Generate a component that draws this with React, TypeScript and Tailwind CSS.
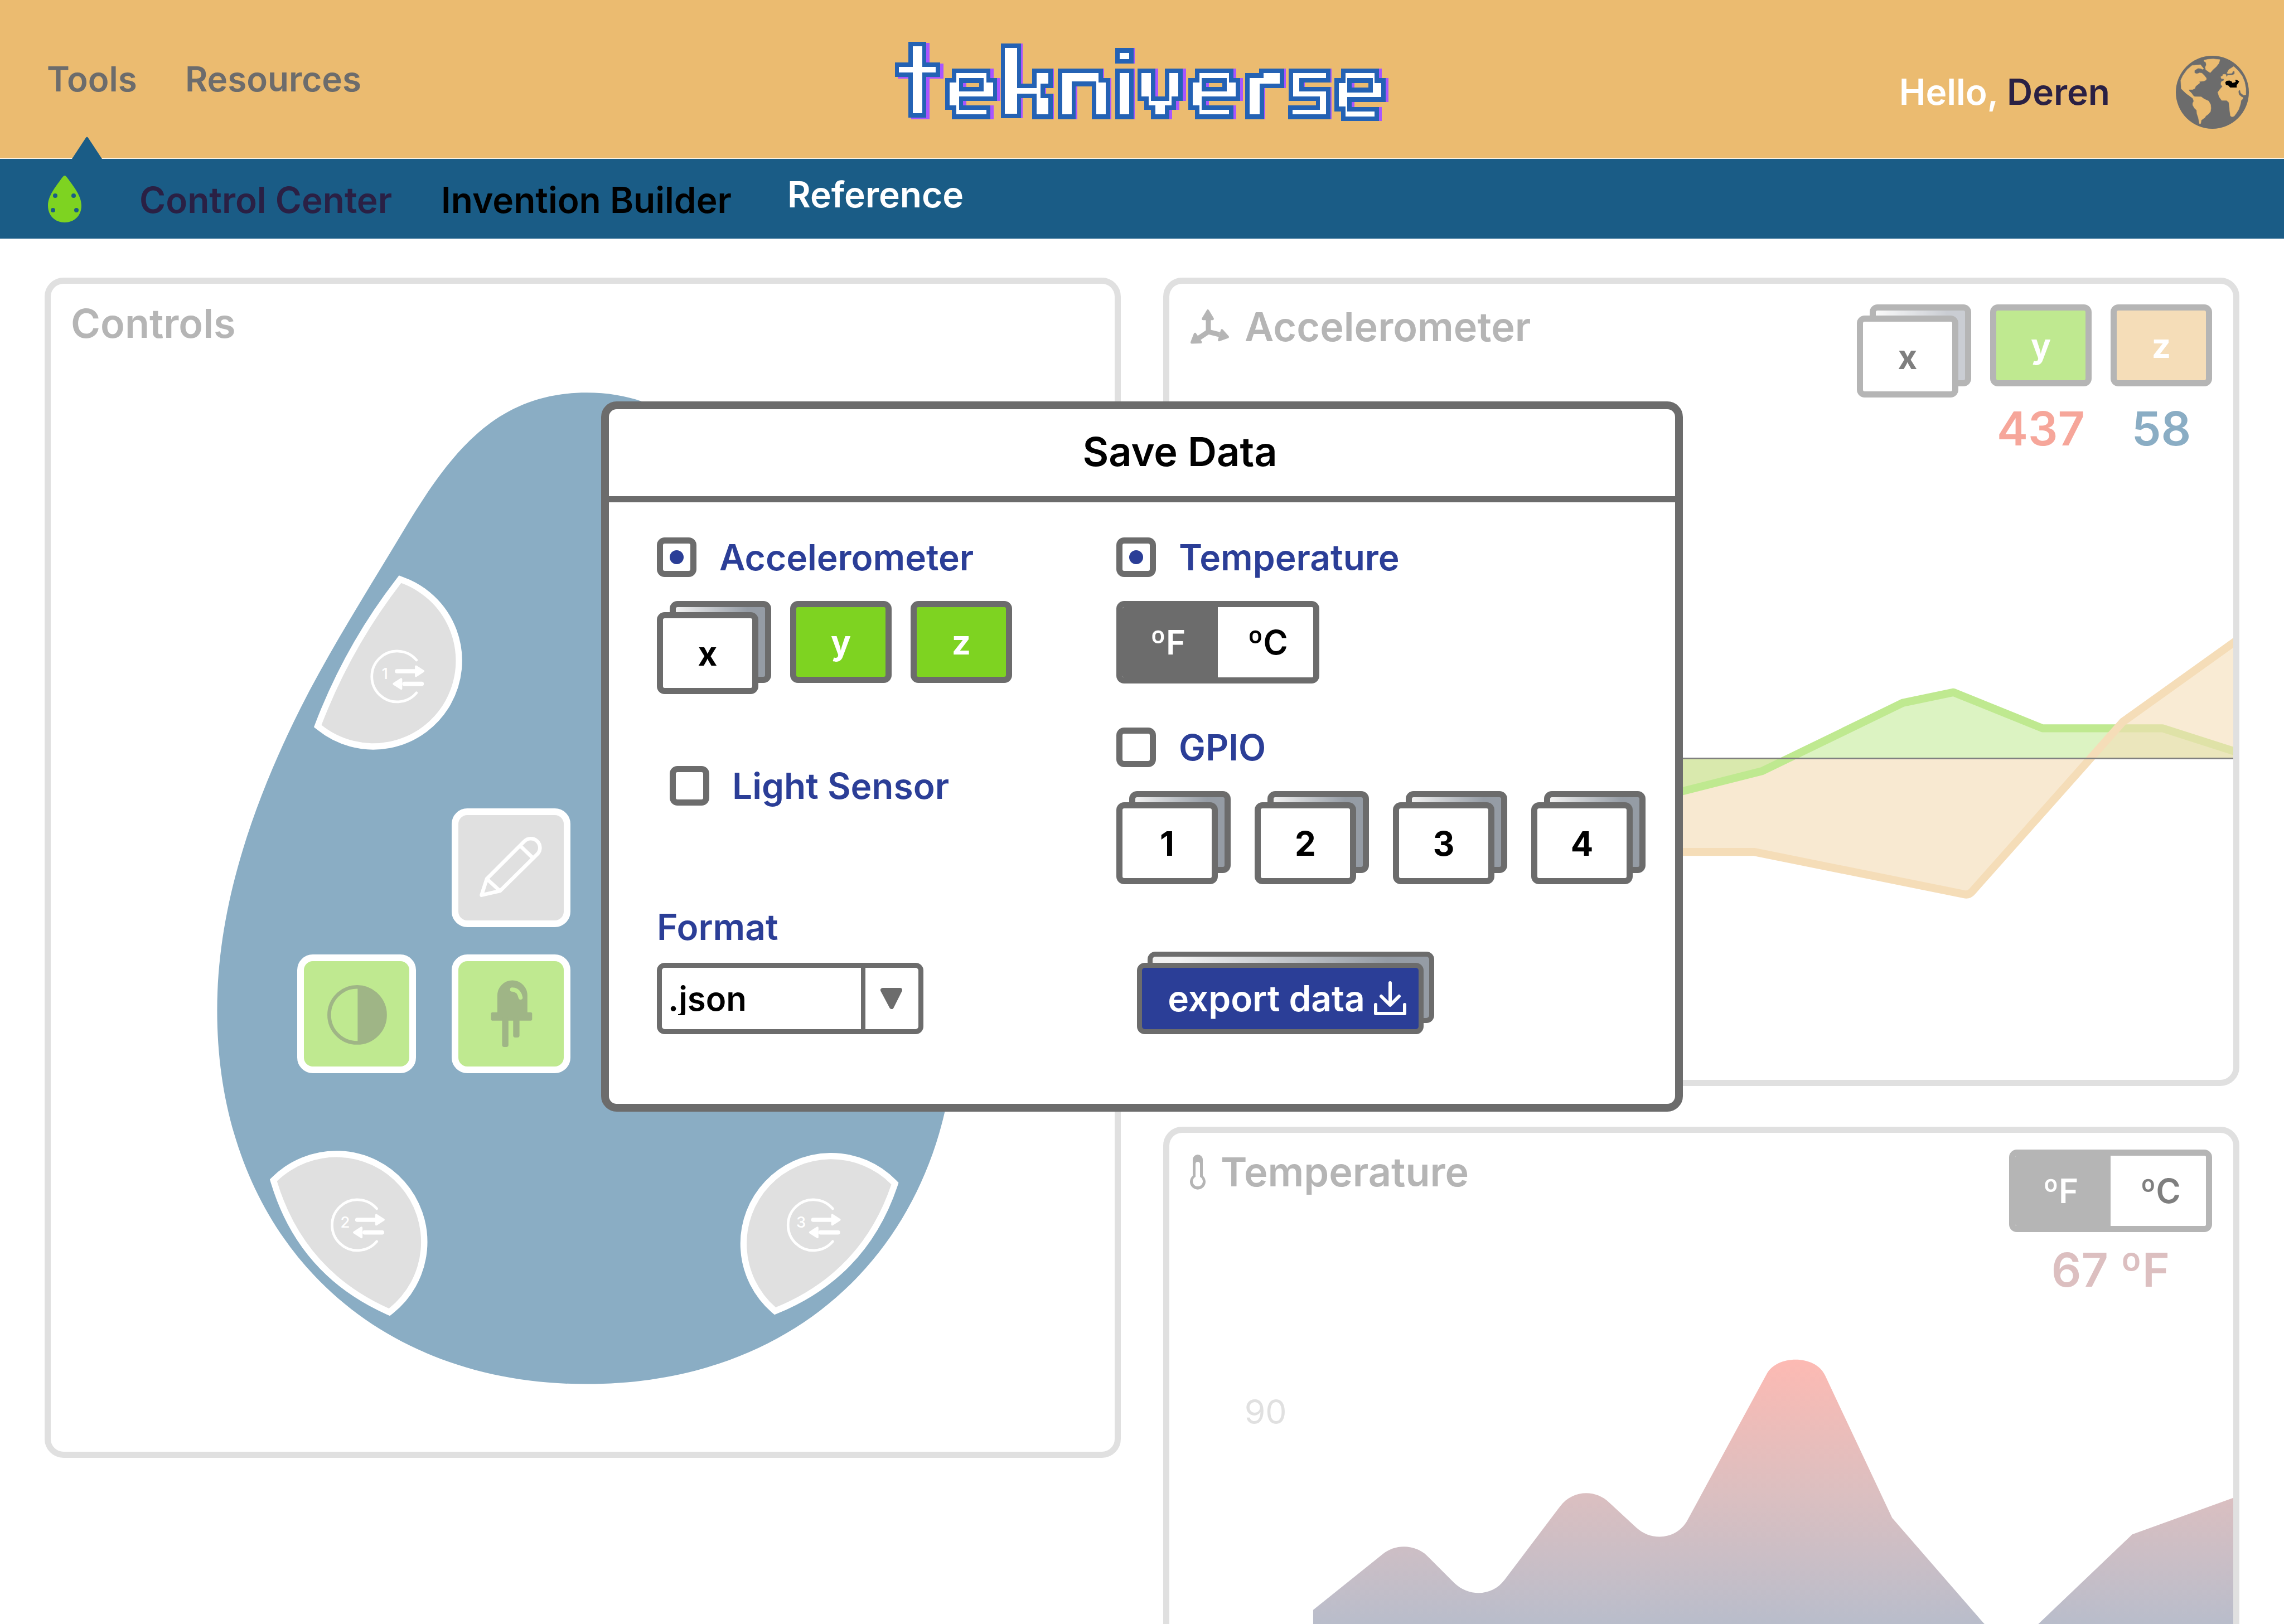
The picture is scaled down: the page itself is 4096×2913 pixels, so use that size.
import React, { useState } from "react";

type Box = [number, number, number, number];

/* Pixel wordmark: every letter is a set of blocks given as x1, y1, x2, y2. */
const letterE = (dx: number): Box[] => [
  [232 + dx, 268, 320 + dx, 296],
  [212 + dx, 320, 239 + dx, 450],
  [232 + dx, 268, 239 + dx, 502],
  [313 + dx, 320, 340 + dx, 398],
  [313 + dx, 268, 320 + dx, 322],
  [212 + dx, 372, 340 + dx, 398],
  [232 + dx, 476, 320 + dx, 502],
];

const wordmark: { shadow: [number, number]; boxes: Box[] }[] = [
  { shadow: [9, 9], boxes: [[102, 114, 130, 493], [62, 231, 171, 262]] },
  { shadow: [9, 0], boxes: letterE(0) },
  {
    shadow: [4, 0],
    boxes: [
      [376, 124, 411, 498],
      [411, 353, 481, 383],
      [470, 268, 504, 326],
      [470, 410, 504, 502],
      [470, 268, 481, 502],
    ],
  },
  {
    shadow: [4, 0],
    boxes: [
      [546, 268, 573, 502],
      [546, 268, 653, 315],
      [647, 320, 674, 502],
      [647, 268, 653, 322],
    ],
  },
  { shadow: [4, 0], boxes: [[716, 151, 744, 188], [716, 268, 744, 502]] },
  {
    shadow: [9, 0],
    boxes: [
      [781, 268, 808, 398],
      [863, 268, 890, 398],
      [802, 268, 808, 450],
      [863, 268, 870, 450],
      [802, 424, 870, 450],
      [822, 424, 850, 502],
    ],
  },
  { shadow: [9, 0], boxes: letterE(720) },
  {
    shadow: [4, 0],
    boxes: [
      [1101, 294, 1131, 502],
      [1101, 294, 1142, 326],
      [1142, 268, 1191, 326],
    ],
  },
  {
    shadow: [4, 0],
    boxes: [
      [1230, 268, 1327, 294],
      [1230, 268, 1248, 398],
      [1230, 372, 1327, 398],
      [1310, 372, 1327, 502],
      [1228, 476, 1327, 502],
    ],
  },
  {
    shadow: [8, 0],
    boxes: [
      [1385, 268, 1472, 296],
      [1365, 322, 1391, 458],
      [1385, 268, 1391, 512],
      [1466, 322, 1492, 404],
      [1466, 268, 1472, 324],
      [1365, 376, 1492, 404],
      [1385, 486, 1472, 512],
    ],
  },
];

function Wordmark() {
  return (
    <svg
      viewBox="48 86 1468 456"
      preserveAspectRatio="none"
      shapeRendering="crispEdges"
      className="h-[144px] w-[888px]"
      role="img"
      aria-label="tekniverse"
    >
      {wordmark.map(({ shadow, boxes }, i) => (
        <g key={i}>
          {boxes.map(([x1, y1, x2, y2], j) => (
            <rect key={j} x={x1 - 13 + shadow[0]} y={y1 - 26 + shadow[1]} width={x2 - x1 + 26} height={y2 - y1 + 52} fill="#a855ff" />
          ))}
          {boxes.map(([x1, y1, x2, y2], j) => (
            <rect key={j} x={x1 - 13} y={y1 - 26} width={x2 - x1 + 26} height={y2 - y1 + 52} fill="#2462b4" />
          ))}
          {boxes.map(([x1, y1, x2, y2], j) => (
            <rect key={j} x={x1} y={y1} width={x2 - x1} height={y2 - y1} fill="#fff" />
          ))}
        </g>
      ))}
    </svg>
  );
}

function Globe() {
  return (
    <svg viewBox="78 75 414 414" className="size-[131px]" aria-hidden="true">
      <circle cx="285" cy="282" r="207" fill="#6c6c6c" />
      <g fill="#ebbb70" strokeLinejoin="round" stroke="#ebbb70" strokeWidth="2">
        <path d="M170 130L218 126L236 149L228 152L222 148L204 145L184 158L183 170L192 177L204 176L212 172L226 174L240 188L251 202L250 212L238 218L210 221L214 229L190 248L186 260L174 266L152 267L153 274L166 286L179 304L186 307L222 308L238 320L264 332L275 352L277 372L274 392L262 406L248 416L242 426L222 440L219 459L212 460L206 428L198 404L196 384L184 372L174 355L174 344L180 332L174 316L158 304L136 288L109 262L106 214L118 188L142 154Z" />
        <path d="M238 100L262 95L290 93L328 97L322 118L306 138L290 152L273 171L262 164L248 154L245 140L251 126L248 112L238 106Z" />
        <path d="M406 136L430 158L454 190L468 224L475 262L475 296L462 298L446 286L443 272L437 268L432 280L436 296L450 308L459 312L457 320L448 328L444 350L434 380L420 402L408 418L396 421L388 416L384 390L379 340L366 328L338 328L324 308L316 282L328 266L342 250L334 238L334 228L338 220L350 216L351 206L336 204L333 194L344 188L344 182L354 180L362 182L364 194L369 192L372 186L392 186L406 182L412 174L410 162L402 162L396 174L376 176L368 174L378 154Z" />
      </g>
      <path d="M358 226L366 217L382 216L396 222L398 229L412 226L418 222L414 211L424 212L437 220L430 234L423 240L423 255L386 255L376 244L362 240Z" fill="#000" />
    </svg>
  );
}

function DropMark() {
  return (
    <svg viewBox="0 0 60 84" className="h-[84px] w-[60px]" aria-hidden="true">
      <path d="M30 0C32 0 34 3 37 7C46 20 60 36 60 54C60 72 47 84 30 84C13 84 0 72 0 54C0 36 14 20 23 7C26 3 28 0 30 0Z" fill="#7ed321" />
      <g fill="#1a5c86">
        <circle cx="13" cy="36" r="4" />
        <circle cx="46" cy="36" r="4" />
        <circle cx="9" cy="62" r="4" />
        <circle cx="51" cy="62" r="4" />
      </g>
    </svg>
  );
}

type Tone = "solid" | "faded";

function StackedKey({ label, tone }: { label: string; tone: Tone }) {
  const solid = tone === "solid";
  return (
    <div className="relative pt-5 pr-[23px]">
      <div
        className={
          "absolute top-0 right-0 h-[147px] w-[182px] rounded-[14px] border-[11px] " +
          (solid
            ? "border-[#6c6c6c] bg-linear-to-r from-[#f2f2f2] to-[#959ca5] to-80%"
            : "border-[#b5b5b5] bg-linear-to-r from-[#fafafa] to-[#cacdd3] to-80%")
        }
      />
      <button
        type="button"
        className={
          "relative block h-[147px] w-[182px] rounded-[14px] border-[11px] bg-white text-[60px] leading-none font-bold " +
          (solid ? "border-[#6c6c6c] text-black" : "border-[#b5b5b5] text-[#7f7f7f]")
        }
      >
        {label}
      </button>
    </div>
  );
}

function FlatKey({ label, look }: { label: string; look: string }) {
  return (
    <button
      type="button"
      className={"block h-[147px] w-[182px] rounded-[14px] border-[11px] text-[60px] leading-none font-bold text-white " + look}
    >
      {label}
    </button>
  );
}

function UnitToggle({ tone }: { tone: Tone }) {
  const solid = tone === "solid";
  return (
    <div
      role="group"
      aria-label="Temperature unit"
      className={
        "grid h-[148px] w-[364px] grid-cols-2 overflow-hidden rounded-[14px] border-[11px] text-[60px] leading-none font-semibold " +
        (solid ? "border-[#6c6c6c]" : "border-[#b5b5b5]")
      }
    >
      <button type="button" aria-pressed="true" className={"pr-2 text-white " + (solid ? "bg-[#6c6c6c]" : "bg-[#b5b5b5]")}>
        ºF
      </button>
      <button type="button" aria-pressed="false" className={"bg-white pl-2 " + (solid ? "text-black" : "text-[#7f7f7f]")}>
        ºC
      </button>
    </div>
  );
}

function CheckRow({ label, initial }: { label: string; initial: boolean }) {
  const [on, setOn] = useState(initial);
  return (
    <label className="flex items-center gap-[41px] text-[64px] leading-[71px] font-semibold text-[#2b3e97]">
      <input
        type="checkbox"
        checked={on}
        onChange={() => setOn(!on)}
        className="size-[71px] shrink-0 appearance-none rounded-[14px] border-[11px] border-[#6c6c6c] bg-white checked:bg-[radial-gradient(circle,#2b3e97_0_12px,#ffffff_13px)]"
      />
      {label}
    </label>
  );
}

function PortGlyph({ n, x, y }: { n: number; x: number; y: number }) {
  return (
    <g transform={`translate(${x} ${y})`} fill="none" stroke="#fff" strokeLinecap="round" strokeLinejoin="round">
      <path d="M37 -31A48 48 0 1 0 37 31" strokeWidth="5" />
      <path d="M0 -10H37M47 14H14" strokeWidth="8" />
      <path d="M36 -19L50 -10L36 -1ZM8 5L-6 14L8 23Z" fill="#fff" strokeWidth="4" />
      <text x="-23" y="5" textAnchor="middle" fill="#fff" stroke="none" fontSize="29" fontWeight="500">
        {n}
      </text>
    </g>
  );
}

const pad = { fill: "#e0e0e0", stroke: "#fff", strokeWidth: 24, paintOrder: "stroke" } as const;

function Board() {
  return (
    <div className="pl-[288px]">
      <div className="relative h-[1801px] w-[1346px]">
        <svg viewBox="400 730 1420 1900" className="absolute inset-0 size-full" aria-hidden="true">
          <path
            d="M1110 743C935 743 850 862 766 1000C689 1129 606 1257 543 1393C467 1557 411 1732 411 1912C411 2330 690 2619 1110 2619C1530 2619 1809 2330 1809 1912C1809 1732 1753 1557 1677 1393C1614 1257 1531 1129 1454 1000C1370 862 1285 743 1110 743Z"
            fill="#8aadc4"
          />
        </svg>
        <button type="button" aria-label="Port 1" className="absolute top-[332px] left-[171px]">
          <svg viewBox="580 1080 300 340" className="h-[322px] w-[284px]">
            <path d="M759 1103A156.4 156.4 0 1 1 608 1372Q664 1226 759 1103Z" {...pad} />
            <PortGlyph n={1} x={751} y={1280} />
          </svg>
        </button>
        <button type="button" aria-label="Port 2" className="absolute top-[1365px] left-[95px]">
          <svg viewBox="500 2170 320 330" className="h-[313px] w-[303px]">
            <path d="M524 2235A160.7 160.7 0 1 1 736 2476Q575 2404 524 2235Z" {...pad} />
            <PortGlyph n={2} x={676} y={2318} />
          </svg>
        </button>
        <button type="button" aria-label="Port 3" className="absolute top-[1370px] left-[943px]">
          <svg viewBox="1395 2175 320 320" className="size-[303px]">
            <path d="M1687 2241A160 160 0 1 0 1468 2474Q1631 2407 1687 2241Z" {...pad} />
            <PortGlyph n={3} x={1539} y={2318} />
          </svg>
        </button>
        <button
          type="button"
          aria-label="Draw"
          className="absolute top-[758px] left-[431px] size-[213px] rounded-[28px] border-[12px] border-white bg-[#e0e0e0]"
        >
          <svg viewBox="867 1541 200 200" className="size-full" fill="none" stroke="#fff" strokeWidth="7" strokeLinejoin="round">
            <path d="M911 1693L921 1662L992 1591A17 17 0 0 1 1017 1615L946 1685ZM921 1662L946 1685M984 1599L1009 1623" />
          </svg>
        </button>
        <button
          type="button"
          aria-label="Contrast"
          className="absolute top-[1020px] left-[154px] size-[213px] rounded-[28px] border-[12px] border-white bg-[#bfe990]"
        >
          <svg viewBox="575 1818 200 200" className="size-full">
            <circle cx="676" cy="1920" r="53" fill="none" stroke="#9fb586" strokeWidth="7" />
            <path d="M677 1867A53 53 0 0 1 677 1973Z" fill="#9fb586" />
          </svg>
        </button>
        <button
          type="button"
          aria-label="LED"
          className="absolute top-[1020px] left-[431px] size-[213px] rounded-[28px] border-[12px] border-white bg-[#bfe990]"
        >
          <svg viewBox="867 1818 200 200" className="size-full">
            <g fill="#9fb586">
              <path d="M941 1918V1883A28 28 0 0 1 998 1883V1918Z" />
              <rect x="929" y="1915" width="78" height="16" rx="3" />
              <rect x="950" y="1925" width="12" height="56" rx="4" />
              <rect x="971" y="1925" width="12" height="38" rx="4" />
            </g>
            <path d="M969 1872C978 1872 983 1878 985 1887" fill="none" stroke="#bfe990" strokeWidth="8" strokeLinecap="round" />
          </svg>
        </button>
      </div>
    </div>
  );
}

function AxesIcon() {
  return (
    <svg viewBox="180 153 228 204" className="h-[64px] w-[71px]" fill="#b5b5b5" stroke="#b5b5b5" strokeLinejoin="round" aria-hidden="true">
      <path d="M286 210V284L232 320M286 284L350 300" fill="none" strokeWidth="29" />
      <path d="M283 163L311 210H255ZM209 297L190 346L242 344ZM364 276L398 314L348 332Z" strokeWidth="14" />
    </svg>
  );
}

function ThermometerIcon() {
  return (
    <svg viewBox="0 0 28 64" className="h-[64px] w-[28px]" fill="none" aria-hidden="true">
      <path d="M5 10A9 9 0 0 1 23 10V39A14 14 0 1 1 5 39Z" fill="#b5b5b5" />
      <path d="M10 18A4 4 0 0 1 18 18V41A9 9 0 1 1 10 41Z" fill="#fff" />
    </svg>
  );
}

function MotionChart() {
  return (
    <svg viewBox="2212 1190 2012 560" className="block w-full" role="img" aria-label="Accelerometer readings">
      <path d="M2484 1435V1612H3319L3721 1693L3954 1435Z" fill="#f5ddb8" fillOpacity="0.65" />
      <path d="M2484 1435L2700 1480L3183 1497L3333 1459L3599 1330L3695 1310L3863 1378H4090L4240 1426V1435Z" fill="#bfe990" fillOpacity="0.55" />
      <path d="M2484 1435L2700 1480L3183 1497L3333 1459L3599 1330L3695 1310L3863 1378H4090L4240 1426" fill="none" stroke="#bfe990" strokeWidth="15" strokeLinejoin="round" />
      <path d="M3954 1435L4015 1366L4240 1202V1435Z" fill="#f5ddb8" fillOpacity="0.6" />
      <path d="M2484 1612H3319L3715 1692Q3724 1694 3730 1687L3954 1435L4015 1366L4240 1205" fill="none" stroke="#f5ddb8" strokeWidth="15" strokeLinejoin="round" />
      <path d="M2484 1435H4224" stroke="#7f7f7f" strokeWidth="3" />
    </svg>
  );
}

function TemperatureChart() {
  return (
    <svg viewBox="2212 2560 2012 700" className="block w-full" role="img" aria-label="Temperature readings">
      <defs>
        <linearGradient id="heat" gradientUnits="userSpaceOnUse" x1="0" y1="2573" x2="0" y2="3072">
          <stop offset="0" stopColor="#fdbab3" />
          <stop offset="0.5" stopColor="#dcbfc0" />
          <stop offset="1" stopColor="#b9bdcb" />
        </linearGradient>
      </defs>
      <text x="2354" y="2695" fill="#e0e0e0" fontSize="64">
        90
      </text>
      <path
        d="M2484 3047L2616 2941C2639 2922 2675 2922 2699 2944L2751 2996C2778 3022 2822 3022 2846 2990L2951 2851C2974 2820 3018 2818 3044 2844L3095 2891C3124 2918 3172 2914 3192 2877L3342 2600C3362 2564 3434 2564 3452 2603L3579 2873L3752 3072L3804 3120L3857 3072L4033 2904L4224 2835V3260H2484Z"
        fill="url(#heat)"
      />
    </svg>
  );
}

const panel = "min-w-0 rounded-[34px] border-[11px] border-[#e0e0e0] bg-white";
const panelTitle = "text-[72px] leading-[80px] font-semibold text-[#b5b5b5]";
const bigValue = "text-center text-[84px] leading-[100px] font-semibold";

function SaveDialog() {
  return (
    <div className="absolute inset-x-0 top-[720px] flex justify-center">
      <section
        role="dialog"
        aria-labelledby="save-title"
        className="w-[1940px] max-w-full rounded-[28px] border-[14px] border-[#6c6c6c] bg-white"
      >
        <h2 id="save-title" className="border-b-[11px] border-[#6c6c6c] pt-9 pb-10 pl-[136px] text-center text-[72px] leading-[80px] font-semibold text-black">
          Save Data
        </h2>
        <div className="grid grid-cols-[824px_1fr] pt-[63px] pb-[125px] pl-[86px]">
          <div className="flex flex-col items-start">
            <CheckRow label="Accelerometer" initial={true} />
            <div className="mt-[43px] flex gap-[34px]">
              <StackedKey label="x" tone="solid" />
              <FlatKey label="y" look="border-[#6c6c6c] bg-[#7ed321]" />
              <FlatKey label="z" look="border-[#6c6c6c] bg-[#7ed321]" />
            </div>
            <div className="mt-[129px] pl-[23px]">
              <CheckRow label="Light Sensor" initial={false} />
            </div>
            <label htmlFor="format" className="mt-auto text-[64px] leading-[72px] font-semibold text-[#2b3e97]">
              Format
            </label>
            <div className="relative mt-[28px]">
              <select
                id="format"
                defaultValue=".json"
                className="block h-[128px] w-[478px] appearance-none rounded-[14px] border-[9px] border-[#6c6c6c] bg-white pr-[112px] pl-[11px] text-[60px] leading-none font-semibold text-black"
              >
                <option>.json</option>
                <option>.csv</option>
              </select>
              <div className="pointer-events-none absolute inset-y-0 right-0 flex w-[112px] items-center justify-center border-l-[8px] border-[#6c6c6c] pr-[11px]">
                <svg viewBox="0 0 39 38" className="h-[38px] w-[39px]" aria-hidden="true">
                  <path d="M4 4H35L20 34Z" fill="#6c6c6c" stroke="#6c6c6c" strokeWidth="8" strokeLinejoin="round" />
                </svg>
              </div>
            </div>
          </div>
          <div className="flex flex-col items-start">
            <CheckRow label="Temperature" initial={true} />
            <div className="mt-[43px]">
              <UnitToggle tone="solid" />
            </div>
            <div className="mt-[79px]">
              <CheckRow label="GPIO" initial={false} />
            </div>
            <div className="mt-[43px] flex gap-[43px]">
              {["1", "2", "3", "4"].map((n) => (
                <StackedKey key={n} label={n} tone="solid" />
              ))}
            </div>
            <div className="relative mt-[121px] ml-[37px] pt-5 pr-[19px]">
              <div className="absolute top-0 right-0 h-[128px] w-[514px] rounded-[14px] border-[9px] border-[#6c6c6c] bg-linear-to-r from-[#f2f2f2] from-10% to-[#959ca5] to-85%" />
              <button
                type="button"
                className="relative flex h-[128px] w-[514px] items-center justify-center gap-[16px] rounded-[14px] border-[9px] border-[#6c6c6c] bg-[#2b3e97] pl-6 text-[64px] leading-none font-semibold whitespace-nowrap text-white"
              >
                export data
                <svg viewBox="0 0 58 62" className="h-[62px] w-[58px] shrink-0" fill="none" stroke="#fff" strokeWidth="6" strokeLinecap="round" strokeLinejoin="round" aria-hidden="true">
                  <path d="M29 3V42M13 27L29 43L45 27M3 42V58H55V42" />
                </svg>
              </button>
            </div>
          </div>
        </div>
      </section>
    </div>
  );
}

export default function App() {
  return (
    <div className="relative h-screen overflow-hidden bg-white font-['Inter','Liberation_Sans',sans-serif]">
      <header className="relative grid h-[285px] grid-cols-[1fr_auto_1fr] items-center border-b border-white bg-[#ebbb70]">
        <nav aria-label="Main" className="flex gap-[86px] pl-[84px] text-[62px] leading-[76px] font-semibold text-[#6c6c6c]">
          <a href="#tools">Tools</a>
          <a href="#resources">Resources</a>
        </nav>
        <div className="pt-2">
          <Wordmark />
        </div>
        <div className="flex items-center justify-end gap-[118px] pt-[46px] pr-[63px]">
          <p className="text-[64px] leading-[76px] font-semibold text-white">
            Hello, <span className="text-[#2a2044]">Deren</span>
          </p>
          <Globe />
        </div>
        <svg viewBox="0 0 54 40" className="absolute -bottom-px left-[129px] h-[40px] w-[54px]" aria-hidden="true">
          <path d="M25 2Q27 -1 29 2L54 40H0Z" fill="#1a5c86" />
        </svg>
      </header>

      <nav
        aria-label="Tools"
        className="flex h-[143px] items-center gap-[88px] bg-[#1a5c86] pl-[86px] text-[64px] leading-[76px] font-semibold"
      >
        <a href="#home" aria-label="Home" className="mr-4">
          <DropMark />
        </a>
        <a href="#control" className="pt-1 text-[#2a2044]">
          Control Center
        </a>
        <a href="#builder" className="pt-1 pr-3 text-black">
          Invention Builder
        </a>
        <a href="#reference" className="pb-4 text-white">
          Reference
        </a>
      </nav>

      <main className="grid grid-cols-2 items-start gap-x-[76px] px-20 pt-[70px]">
        <section className={panel + " pb-[111px]"}>
          <h2 className={panelTitle + " pt-[31px] pb-[72px] pl-[36px]"}>Controls</h2>
          <Board />
        </section>

        <div className="flex min-w-0 flex-col gap-[73px]">
          <section className={panel + " pb-[278px]"}>
            <div className="flex items-start justify-between pt-[37px] pr-[38px] pl-[37px]">
              <h2 className={panelTitle + " flex items-center gap-[27px]"}>
                <AxesIcon />
                Accelerometer
              </h2>
              <div className="flex gap-[34px]">
                <StackedKey label="x" tone="faded" />
                <div className="flex flex-col gap-[26px]">
                  <FlatKey label="y" look="border-[#b5b5b5] bg-[#bfe990]" />
                  <p className={bigValue + " text-[#f6a69a]"}>437</p>
                </div>
                <div className="flex flex-col gap-[26px]">
                  <FlatKey label="z" look="border-[#b5b5b5] bg-[#f5ddb8]" />
                  <p className={bigValue + " text-[#8aadc4]"}>58</p>
                </div>
              </div>
            </div>
            <div className="pt-[309px]">
              <MotionChart />
            </div>
          </section>

          <section className={panel}>
            <div className="flex items-start justify-between pt-[30px] pr-[38px] pl-[37px]">
              <h2 className={panelTitle + " flex items-center gap-[27px]"}>
                <ThermometerIcon />
                Temperature
              </h2>
              <div className="flex flex-col gap-[18px]">
                <UnitToggle tone="faded" />
                <p className={bigValue + " text-[#dcbfc0]"}>67 ºF</p>
              </div>
            </div>
            <div className="pt-[98px]">
              <TemperatureChart />
            </div>
          </section>
        </div>
      </main>

      <SaveDialog />
    </div>
  );
}
